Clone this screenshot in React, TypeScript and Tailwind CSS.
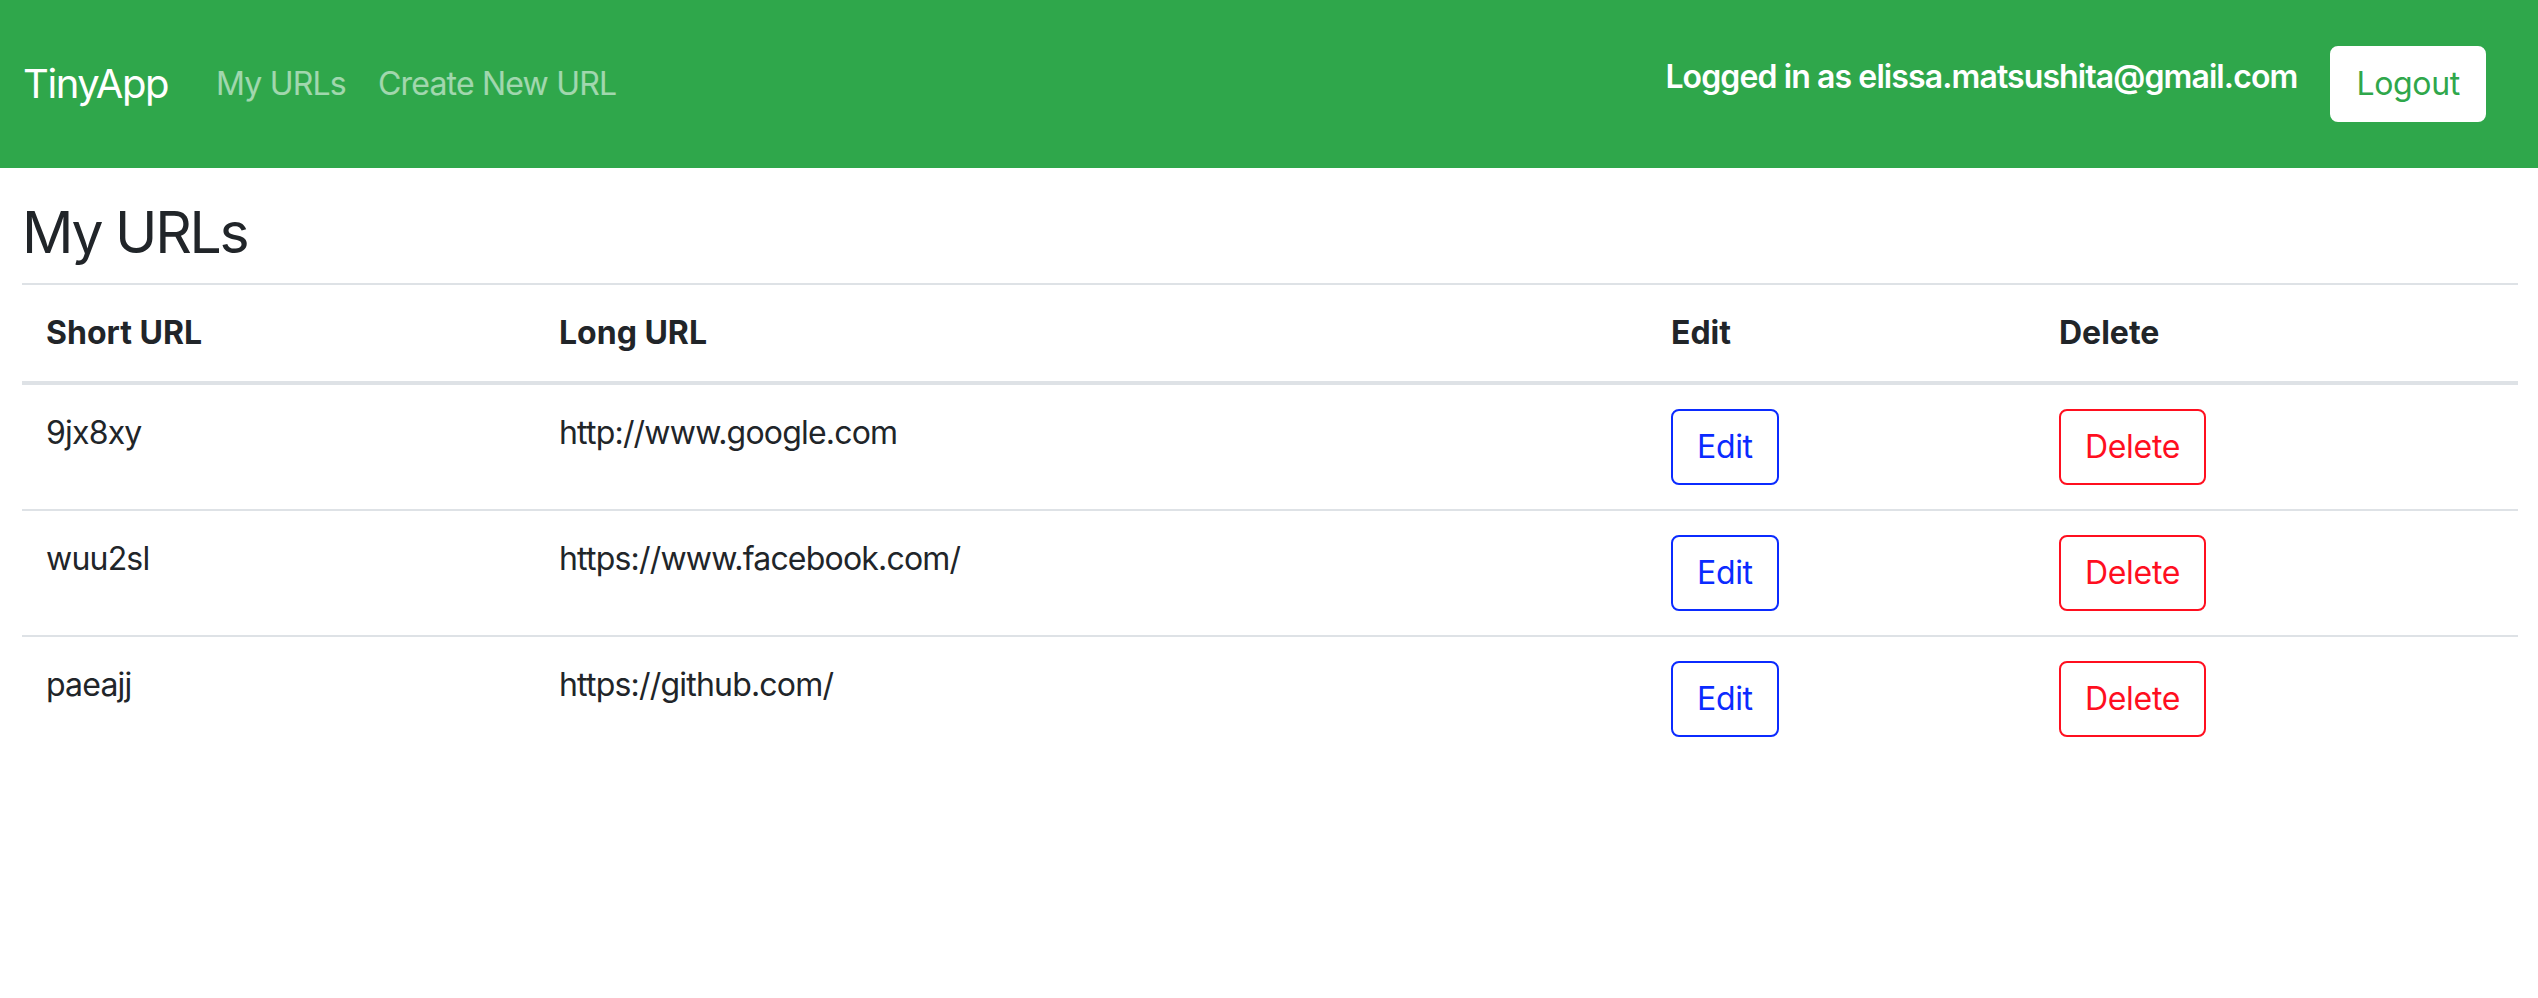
const URLS = [
  { short: "9jx8xy", long: "http://www.google.com" },
  { short: "wuu2sl", long: "https://www.facebook.com/" },
  { short: "paeajj", long: "https://github.com/" },
];

function NavBar() {
  return (
    <nav className="flex items-center h-[168px] bg-[#2fa74b] pl-[23px] pr-[52px]">
      <a className="text-[40px] leading-[60px] tracking-[-0.035em] text-white mr-[32px]">TinyApp</a>
      <a className="px-[16px] text-[32px] leading-[48px] tracking-[-0.025em] text-white/55">My URLs</a>
      <a className="px-[16px] text-[32px] leading-[48px] tracking-[-0.025em] text-white/55">Create New URL</a>

      <div className="ml-auto flex items-center">
        <span className="text-[32px] leading-[48px] font-semibold tracking-[-0.028em] text-white mr-[33px] mb-[14px]">
          Logged in as elissa.matsushita@gmail.com
        </span>
        <button className="h-[76px] px-[24px] rounded-[8px] border-2 border-white bg-white text-[32px] leading-[48px] tracking-[-0.01em] text-[#2fa74b]">
          Logout
        </button>
      </div>
    </nav>
  );
}

export default function App() {
  return (
    <div
      className="min-h-screen bg-white text-[#212529]"
      style={{ fontFamily: "Inter, 'Noto Sans', Arial, sans-serif" }}
    >
      <NavBar />

      <main className="pl-[22px] pr-[20px]">
        <h2 className="mt-[30px] mb-[15px] text-[57px] leading-[70px] font-normal tracking-[-0.04em]">My URLs</h2>

        <table className="w-full table-fixed border-collapse text-[32px] leading-[48px]">
          <thead>
            <tr>
              <th className="w-[513px] text-left font-bold align-bottom p-[24px] border-t-2 border-b-4 border-[#dee2e6]">Short URL</th>
              <th className="w-[1112px] text-left font-bold align-bottom p-[24px] border-t-2 border-b-4 border-[#dee2e6]">Long URL</th>
              <th className="w-[388px] text-left font-bold align-bottom p-[24px] border-t-2 border-b-4 border-[#dee2e6]">Edit</th>
              <th className="text-left font-bold align-bottom p-[24px] border-t-2 border-b-4 border-[#dee2e6]">Delete</th>
            </tr>
          </thead>
          <tbody>
            {URLS.map((u, i) => (
              <tr key={u.short}>
                <td className={`align-top p-[24px] tracking-[-0.025em] ${i > 0 ? "border-t-2 border-[#dee2e6]" : ""}`}>{u.short}</td>
                <td className={`align-top p-[24px] tracking-[-0.025em] ${i > 0 ? "border-t-2 border-[#dee2e6]" : ""}`}>{u.long}</td>
                <td className={`align-top p-[24px] ${i > 0 ? "border-t-2 border-[#dee2e6]" : ""}`}>
                  <button className="h-[76px] px-[24px] rounded-[8px] border-2 border-[#0b2bff] text-[#0b2bff] bg-transparent tracking-[-0.01em]">
                    Edit
                  </button>
                </td>
                <td className={`align-top p-[24px] ${i > 0 ? "border-t-2 border-[#dee2e6]" : ""}`}>
                  <button className="h-[76px] px-[24px] rounded-[8px] border-2 border-[#ff0f1f] text-[#ff0f1f] bg-transparent tracking-[-0.01em]">
                    Delete
                  </button>
                </td>
              </tr>
            ))}
          </tbody>
        </table>
      </main>
    </div>
  );
}
